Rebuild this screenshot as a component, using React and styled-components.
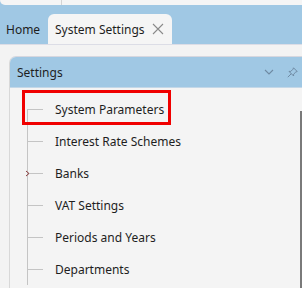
import React from "react";
import styled, { createGlobalStyle } from "styled-components";

const Global = createGlobalStyle`
  html, body { margin: 0; padding: 0; }
  body {
    background: #f3f3f3;
    font-family: "Noto Sans", "Open Sans", sans-serif;
    color: #1e1e1e;
    width: 302px;
    height: 288px;
    overflow: hidden;
  }
`;

const Page = styled.div`
  width: 302px;
  height: 288px;
  overflow: hidden;
  display: flex;
  flex-direction: column;
`;

const Top = styled.div`
  background: #a0c8e4;
  display: flex;
  flex-direction: column;
`;

const AddressStrip = styled.div`
  height: 5px;
  background: #f5f5f5;
  border-bottom-left-radius: 6px;
  display: flex;
`;

const StripSegment = styled.div`
  width: 61px;
  border-right: 1px solid #d4d4d4;
`;

const TabBar = styled.div`
  height: 39px;
  display: flex;
  align-items: flex-end;
  border-bottom: 1px solid #dcdde6;
`;

const Tab = styled.div`
  height: 30px;
  box-sizing: border-box;
  flex-shrink: 0;
  white-space: nowrap;
  display: flex;
  align-items: center;
  gap: 7px;
  font-size: 12px;
  padding: ${(p) => (p.$active ? "0 9px 0 7px" : "0 0 0 6px")};
  width: ${(p) => p.$w}px;
  background: ${(p) => (p.$active ? "#f5f5f5" : "transparent")};
  border-radius: 6px 6px 0 0;

  svg { flex-shrink: 0; }
`;

const Content = styled.div`
  flex: 1;
  padding: 11px 0 0 9px;
  display: flex;
`;

const Panel = styled.div`
  flex: 1;
  display: flex;
  flex-direction: column;
  border-left: 1px solid #d8d8d8;
  border-top: 1px solid #d6d7df;
  border-top-left-radius: 7px;
  background: #f4f4f4;
  overflow: hidden;
  position: relative;
`;

const PanelHeader = styled.div`
  height: 30px;
  background: #a0c8e4;
  display: flex;
  align-items: center;
  padding: 0 4px 0 7px;
  font-size: 12px;
  border-bottom: 1px solid #c4d8e8;
`;

const HeaderTitle = styled.span`
  flex: 1;
`;

const HeaderIcons = styled.div`
  display: flex;
  align-items: center;
  gap: 13px;
`;

const Tree = styled.div`
  padding-top: 5px;
  display: flex;
  flex-direction: column;
`;

const Row = styled.div`
  position: relative;
  height: 32px;
  display: flex;
  align-items: center;
  padding-left: 45px;
  font-size: 12px;
  white-space: nowrap;

  &::before {
    content: "";
    position: absolute;
    left: 17px;
    top: ${(p) => (p.$first ? "50%" : "0")};
    bottom: 0;
    width: 1px;
    background: #c4c4c4;
  }
  &::after {
    content: "";
    position: absolute;
    left: 18px;
    top: 50%;
    width: 15px;
    height: 1px;
    background: #c4c4c4;
  }
`;

const Highlight = styled.div`
  position: absolute;
  left: 12px;
  top: -3px;
  width: 149px;
  height: 35px;
  box-sizing: border-box;
  border: 3px solid #f00000;
`;

const Expander = styled.svg`
  position: absolute;
  left: 15px;
  top: 13px;
  z-index: 1;
`;

const ScrollThumb = styled.div`
  position: absolute;
  right: 0;
  top: 54px;
  bottom: 0;
  width: 2px;
  background: #7a7a7a;
`;

const CloseIcon = () => (
  <svg width="12" height="12" viewBox="0 0 12 12">
    <path d="M1 1 L11 11 M11 1 L1 11" stroke="#8a8a8a" strokeWidth="1.1" fill="none" />
  </svg>
);

const ChevronDown = () => (
  <svg width="10" height="6" viewBox="0 0 10 6">
    <path d="M1 1 L5 5 L9 1" stroke="#6f8aa3" strokeWidth="1.1" fill="none" />
  </svg>
);

const PinIcon = () => (
  <svg width="11" height="11" viewBox="0 0 11 11">
    <g stroke="#6f8aa3" strokeWidth="1" fill="none">
      <path d="M6.5 0.8 L10.2 4.5 L8.8 5 L6.6 7.2 L6.6 9 L2 4.4 L3.8 4.4 L6 2.2 Z" />
      <path d="M4.2 6.8 L0.8 10.2" />
    </g>
  </svg>
);

const items = [
  { label: "System Parameters", selected: true },
  { label: "Interest Rate Schemes" },
  { label: "Banks", expandable: true },
  { label: "VAT Settings" },
  { label: "Periods and Years" },
  { label: "Departments" },
];

export default function App() {
  return (
    <>
      <Global />
      <Page>
        <Top>
          <AddressStrip>
            <StripSegment />
          </AddressStrip>
          <TabBar>
            <Tab $w={48}>Home</Tab>
            <Tab $active $w={124}>
              System Settings
              <CloseIcon />
            </Tab>
          </TabBar>
        </Top>
        <Content>
          <Panel>
            <PanelHeader>
              <HeaderTitle>Settings</HeaderTitle>
              <HeaderIcons>
                <ChevronDown />
                <PinIcon />
              </HeaderIcons>
            </PanelHeader>
            <Tree>
              {items.map((it, i) => (
                <Row key={it.label} $first={i === 0}>
                  {it.expandable && (
                    <Expander width="5" height="7" viewBox="0 0 5 7">
                      <path d="M1 1 L4 3.5 L1 6" stroke="#8a3b3b" strokeWidth="1" fill="none" />
                    </Expander>
                  )}
                  {it.label}
                  {it.selected && <Highlight />}
                </Row>
              ))}
            </Tree>
            <ScrollThumb />
          </Panel>
        </Content>
      </Page>
    </>
  );
}
